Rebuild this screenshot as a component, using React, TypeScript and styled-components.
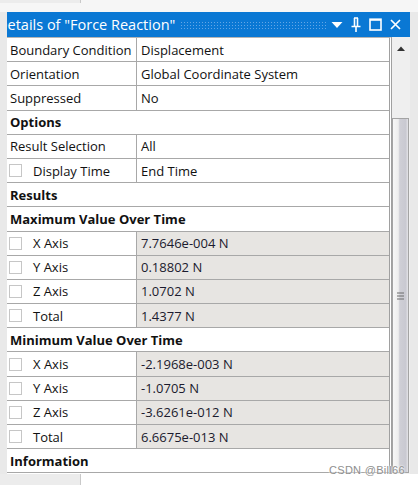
import React from 'react'
import styled, { createGlobalStyle } from 'styled-components'

/*---> Data <---*/
type Item =
  | { kind: 'prop'; name: string; value: string }
  | { kind: 'check'; name: string; value: string; shaded?: boolean }
  | { kind: 'group'; name: string }

const items: Item[] = [
  { kind: 'prop', name: 'Boundary Condition', value: 'Displacement' },
  { kind: 'prop', name: 'Orientation', value: 'Global Coordinate System' },
  { kind: 'prop', name: 'Suppressed', value: 'No' },
  { kind: 'group', name: 'Options' },
  { kind: 'prop', name: 'Result Selection', value: 'All' },
  { kind: 'check', name: 'Display Time', value: 'End Time' },
  { kind: 'group', name: 'Results' },
  { kind: 'group', name: 'Maximum Value Over Time' },
  { kind: 'check', name: 'X Axis', value: '7.7646e-004 N', shaded: true },
  { kind: 'check', name: 'Y Axis', value: '0.18802 N', shaded: true },
  { kind: 'check', name: 'Z Axis', value: '1.0702 N', shaded: true },
  { kind: 'check', name: 'Total', value: '1.4377 N', shaded: true },
  { kind: 'group', name: 'Minimum Value Over Time' },
  { kind: 'check', name: 'X Axis', value: '-2.1968e-003 N', shaded: true },
  { kind: 'check', name: 'Y Axis', value: '-1.0705 N', shaded: true },
  { kind: 'check', name: 'Z Axis', value: '-3.6261e-012 N', shaded: true },
  { kind: 'check', name: 'Total', value: '6.6675e-013 N', shaded: true },
  { kind: 'group', name: 'Information' },
]

/*---> Component <---*/
export default function App() {
  return (
    <>
      <GlobalStyle />
      <Screen>
        <EdgeStrip>
          <SideTab />
        </EdgeStrip>
        <Middle>
          <Gutter $w={7} />
          <Panel>
            <TitleBar>
              <TitleText>Details of "Force Reaction"</TitleText>
              <Grip />
              <TitleButtons>
                <svg width="12" height="8" viewBox="0 0 12 8">
                  <path d="M0.5 1 L11.5 1 L6 7 Z" fill="#fff" />
                </svg>
                <svg width="10" height="15" viewBox="0 0 10 15">
                  <path
                    d="M3 1 H7 M3.5 1 V9 M6.5 1 V9 M0.5 9.5 H9.5 M5 9.5 V15"
                    stroke="#fff"
                    strokeWidth="1.6"
                    fill="none"
                  />
                </svg>
                <svg width="13" height="13" viewBox="0 0 13 13">
                  <rect x="1" y="1.2" width="11" height="10.8" stroke="#fff" strokeWidth="1.6" fill="none" />
                  <path d="M1 2 H12" stroke="#fff" strokeWidth="1.6" />
                </svg>
                <svg width="11" height="11" viewBox="0 0 11 11">
                  <path d="M1 1 L10 10 M10 1 L1 10" stroke="#fff" strokeWidth="1.7" />
                </svg>
              </TitleButtons>
            </TitleBar>
            <Body>
              <Grid>
                {items.map((it, i) =>
                  it.kind === 'group' ? (
                    <GroupRow key={i}>{it.name}</GroupRow>
                  ) : (
                    <Row key={i}>
                      <NameCell>
                        {it.kind === 'check' && <CheckBox />}
                        {it.name}
                      </NameCell>
                      <ValueCell $shaded={it.kind === 'check' && !!it.shaded}>{it.value}</ValueCell>
                    </Row>
                  )
                )}
              </Grid>
              <ScrollBar>
                <ArrowUp>
                  <svg width="8" height="5" viewBox="0 0 8 5">
                    <path d="M0 5 L4 0.5 L8 5 Z" fill="#333" />
                  </svg>
                </ArrowUp>
                <Thumb>
                  <svg width="7" height="8" viewBox="0 0 7 8">
                    <path d="M0 1 H7 M0 4 H7 M0 7 H7" stroke="#6a6a6a" strokeWidth="1" />
                  </svg>
                </Thumb>
              </ScrollBar>
            </Body>
          </Panel>
          <Gutter $w={8} />
        </Middle>
        <EdgeStrip $bottom>
          <SideTab $bottom />
        </EdgeStrip>
        <Watermark>CSDN @Bill66</Watermark>
      </Screen>
    </>
  )
}

/*---> Styles <---*/
const GlobalStyle = createGlobalStyle`
  body {
    margin: 0;
    background: #fff;
    font-family: 'Open Sans', 'Noto Sans', sans-serif;
  }
`

const Screen = styled.div`
  position: relative;
  width: 418px;
  height: 485px;
  overflow: hidden;
  display: flex;
  flex-direction: column;
`

const EdgeStrip = styled.div<{ $bottom?: boolean }>`
  height: ${(p) => (p.$bottom ? 11 : 12)}px;
  background: ${(p) => (p.$bottom ? '#fff' : '#f6f6f6')};
  flex-shrink: 0;
`

const SideTab = styled.div<{ $bottom?: boolean }>`
  width: 80px;
  height: ${(p) => (p.$bottom ? 11 : 3)}px;
  background: #ececec;
  border-right: 1px solid #c9c9c9;
`

const Middle = styled.div`
  display: flex;
  height: 462px;
  flex-shrink: 0;
`

const Gutter = styled.div<{ $w: number }>`
  width: ${(p) => p.$w}px;
  flex-shrink: 0;
  background: #e9e9e9;
`

const Panel = styled.div`
  flex: 1;
  display: flex;
  flex-direction: column;
  min-width: 0;
`

const TitleBar = styled.div`
  height: 25px;
  flex-shrink: 0;
  background: #0a78d4;
  display: flex;
  align-items: center;
  overflow: hidden;
`

const TitleText = styled.span`
  color: #fff;
  font-size: 14.5px;
  margin-left: -10px;
  white-space: nowrap;
`

const Grip = styled.div`
  flex: 1;
  height: 8px;
  margin: 0 4px 0 5px;
  background-image: radial-gradient(circle, #63a6e6 0.8px, transparent 1px);
  background-size: 3px 3px;
`

const TitleButtons = styled.div`
  display: flex;
  align-items: center;
  gap: 8px;
  padding-right: 9px;

  svg {
    display: block;
  }
`

const Body = styled.div`
  flex: 1;
  display: flex;
  min-height: 0;
`

const Grid = styled.div`
  flex: 1;
  border-top: 1px solid #b5b5b5;
  border-right: 3px double #a0a0a0;
  background: #fff;
  font-size: 13px;
  color: #111;
`

const Row = styled.div`
  display: grid;
  grid-template-columns: 130px 1fr;
  height: 24.2px;
  box-sizing: border-box;
  border-bottom: 1px solid #a8a8a8;
`

const GroupRow = styled.div`
  height: 24.2px;
  box-sizing: border-box;
  border-bottom: 1px solid #a8a8a8;
  display: flex;
  align-items: center;
  padding-left: 3px;
  font-weight: 700;
`

const NameCell = styled.div`
  display: flex;
  align-items: center;
  padding-left: 3px;
  border-right: 1px solid #a8a8a8;
  white-space: nowrap;
  overflow: hidden;
`

const CheckBox = styled.span`
  width: 11px;
  height: 11px;
  border: 1px solid #c6c6c6;
  background: #fff;
  margin: 0 11px 0 -1px;
  flex-shrink: 0;
`

const ValueCell = styled.div<{ $shaded?: boolean }>`
  display: flex;
  align-items: center;
  padding-left: 4px;
  white-space: nowrap;
  overflow: hidden;
  background: ${(p) => (p.$shaded ? '#e7e5e2' : '#fff')};
  color: ${(p) => (p.$shaded ? '#1b1b2e' : '#111')};
`

const ScrollBar = styled.div`
  width: 18px;
  flex-shrink: 0;
  background: #efefef;
  display: flex;
  flex-direction: column;
`

const ArrowUp = styled.div`
  height: 81px;
  display: flex;
  justify-content: center;
  padding-top: 9px;
  box-sizing: border-box;

  svg {
    display: block;
  }
`

const Thumb = styled.div`
  flex: 1;
  margin: 0 1px 1px 0;
  border: 1px solid #a4a4a4;
  background: linear-gradient(
    to right,
    #f7f7f7 0%,
    #eeeeee 35%,
    #cfcfd6 45%,
    #c9c9d1 85%,
    #e4e4e8 100%
  );
  display: flex;
  align-items: center;
  justify-content: center;
`

const Watermark = styled.div`
  position: absolute;
  left: 329px;
  top: 464px;
  font-family: 'Liberation Sans', Arial, sans-serif;
  font-size: 11px;
  color: #8e8e8e;
  text-shadow: 0 0 2px #fff, 0 0 2px #fff;
  letter-spacing: 0.3px;
`
